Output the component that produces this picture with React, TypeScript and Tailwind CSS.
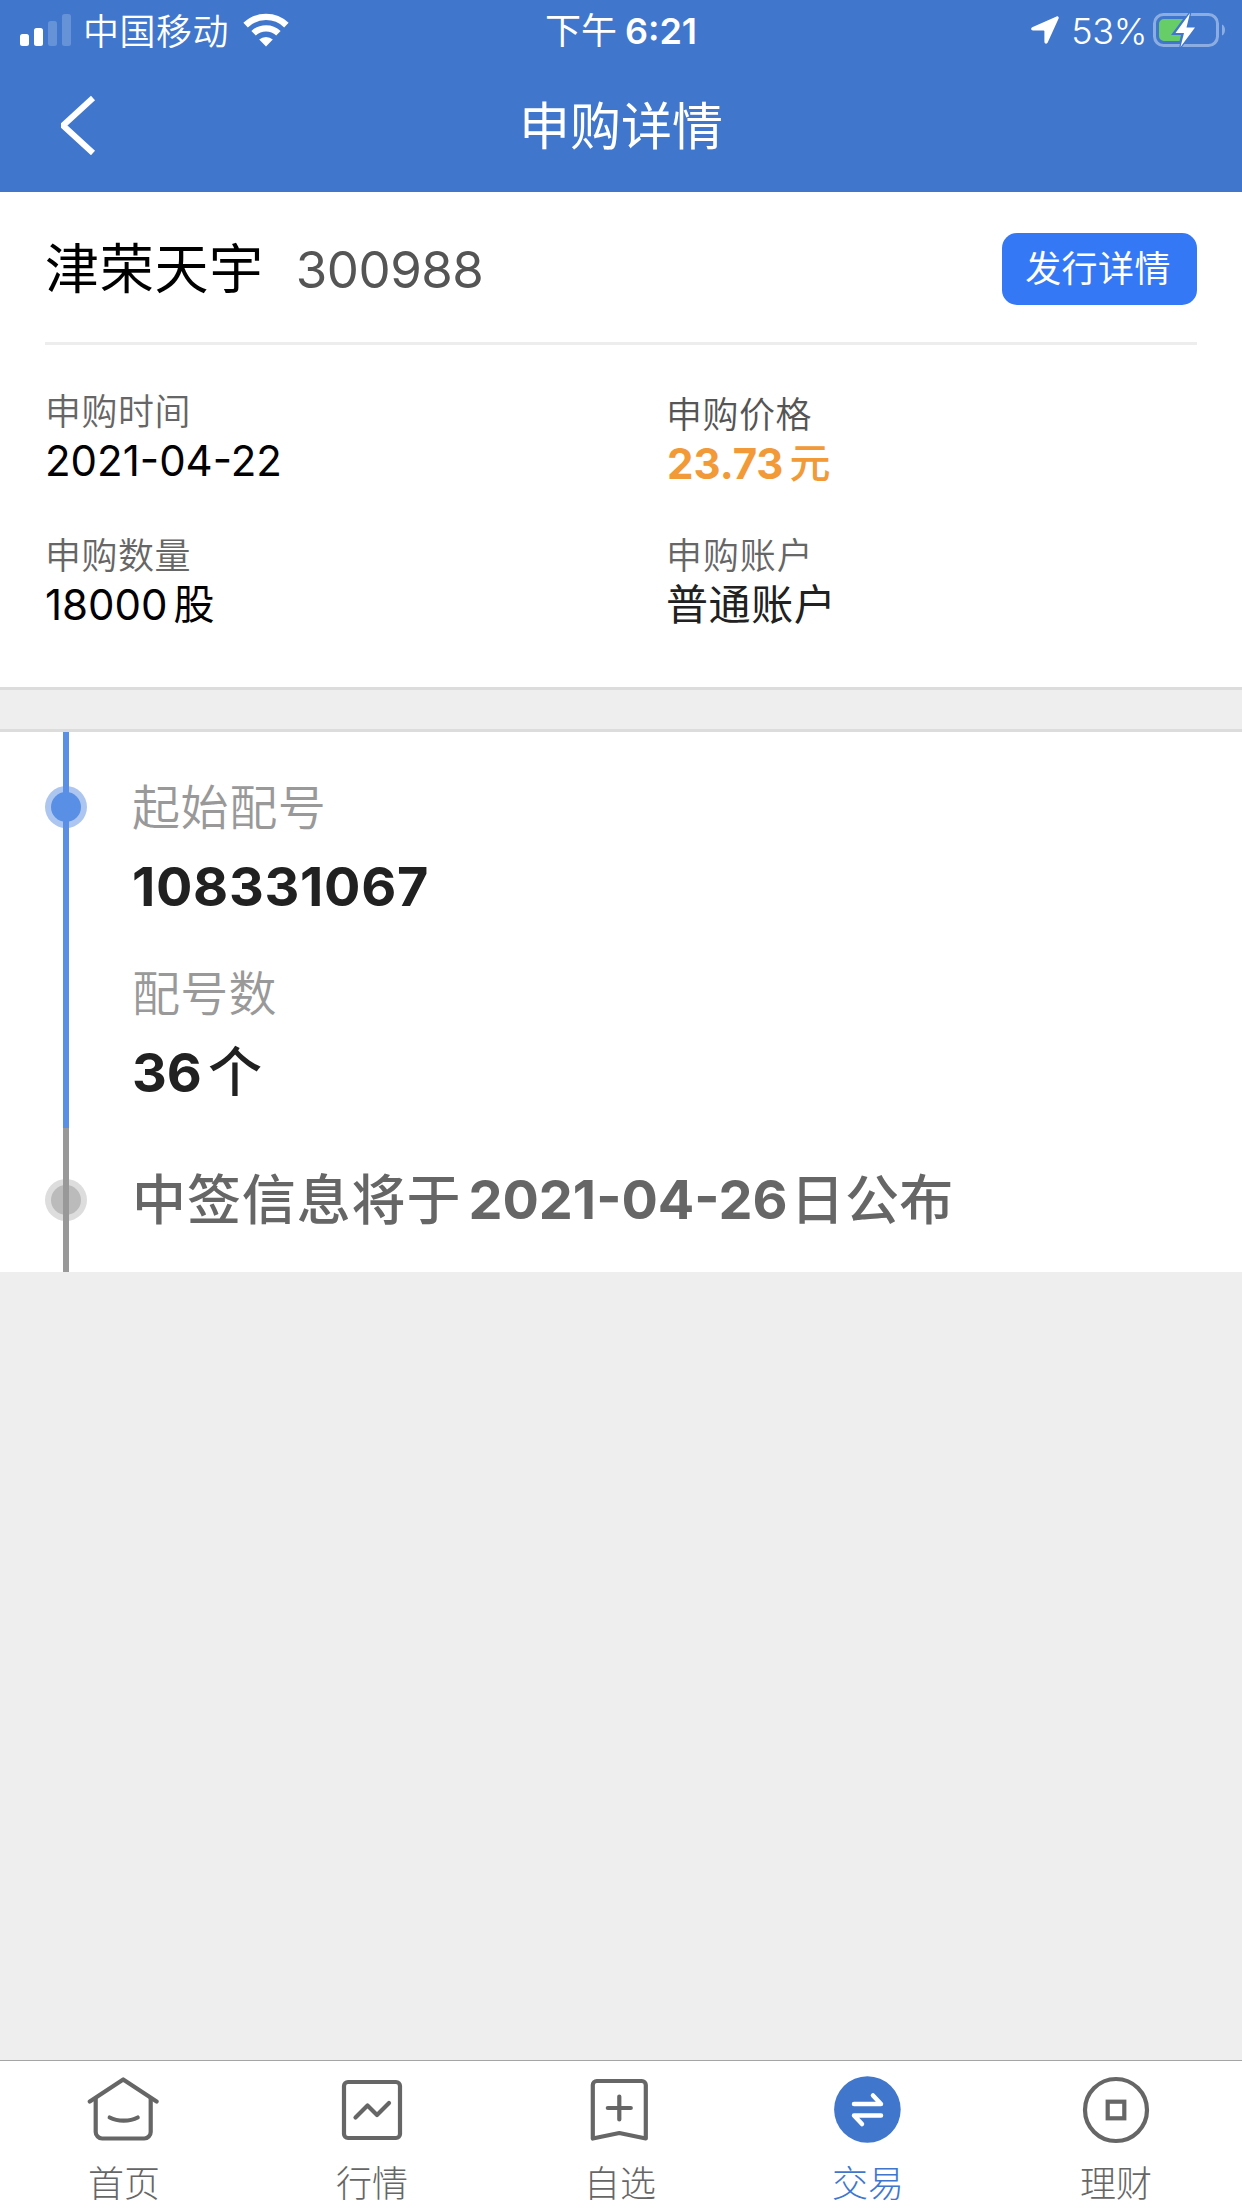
import type { ReactNode } from "react";

function Signal() {
  return (
    <svg className="h-8 w-[51px]" viewBox="0 0 51 32" fill="#fff">
      <rect x="0" y="20" width="9" height="12" rx="2.5" />
      <rect x="14" y="14" width="9" height="18" rx="2.5" />
      <rect x="28" y="7" width="9" height="25" rx="2.5" opacity=".2" />
      <rect x="42" y="0" width="9" height="32" rx="2.5" opacity=".2" />
    </svg>
  );
}

function Wifi() {
  return (
    <svg className="h-[34px] w-[46px]" viewBox="0 0 46 34" fill="none" stroke="#fff" strokeWidth="6.4">
      <path d="M2.6 12.1a29.5 29.5 0 0 1 40.8 0" />
      <path d="M10.6 20.3a18 18 0 0 1 24.8 0" />
      <path d="M16.2 26.6a10 10 0 0 1 13.6 0L23 33.4z" fill="#fff" stroke="none" />
    </svg>
  );
}

function Location() {
  return (
    <svg className="h-7 w-7" viewBox="0 0 28 28" fill="#fff">
      <path d="M25.6.4 1.2 11.2C-.6 12 .1 14.4 2 14.4h10.6c.5 0 .8.3.8.8v10.6c0 2 2.5 2.6 3.3.8L27.6 2.6C28.2 1.2 27 0 25.6.4z" />
    </svg>
  );
}

function Battery() {
  return (
    <svg className="h-9 w-[74px]" viewBox="0 0 74 36" fill="none">
      <rect x="1.5" y="2.5" width="63" height="31" rx="9" stroke="#fff" strokeOpacity=".4" strokeWidth="3" />
      <path d="M69 12.5c4 1.5 4 9.5 0 11z" fill="#fff" fillOpacity=".4" />
      <path d="M11 7h19L18 23h10l-1.5 6H11a5 5 0 0 1-5-5V12a5 5 0 0 1 5-5z" fill="#67ce67" />
      <path d="M37 1 22.5 21H31l-3.5 14L42 15.5h-8.5z" fill="#fff" stroke="#4077cd" strokeWidth="2.5" paintOrder="stroke" />
    </svg>
  );
}

function HomeIcon() {
  return (
    <svg className="h-[70px] w-[74px]" viewBox="0 0 74 70" fill="none" stroke="#666" strokeWidth="4.2" strokeLinecap="round" strokeLinejoin="round">
      <path d="M2.8 27.5 36.2 5.5l33.4 22" />
      <path d="M8.7 24.5V58a6.5 6.5 0 0 0 6.500 6.500h42a6.500 6.500 0 0 0 6.500-6.500V24.500" />
      <path d="M22.700 43.500c8 4.200 20 4.200 28 0" />
    </svg>
  );
}

function MarketIcon() {
  return (
    <svg className="h-[70px] w-[74px]" viewBox="0 0 74 70" fill="none" stroke="#666" strokeWidth="4.2" strokeLinecap="round" strokeLinejoin="round">
      <rect x="9" y="8" width="56" height="56" rx="4" />
      <path d="M20.5 43.5 32.5 31.5 42 41l12-12" />
    </svg>
  );
}

function WatchIcon() {
  return (
    <svg className="h-[70px] w-[74px]" viewBox="0 0 74 70" fill="none" stroke="#666" strokeWidth="4.2" strokeLinecap="round" strokeLinejoin="round">
      <path d="M9.8 64.5V11a4 4 0 0 1 4-4h45a4 4 0 0 1 4 4v53.5L36.300 59z" />
      <path d="M24.800 34h23M36.300 22.500v23" />
    </svg>
  );
}

function TradeIcon() {
  return (
    <svg className="h-[70px] w-[74px]" viewBox="0 0 74 70" fill="none" stroke="#fff" strokeWidth="4.5" strokeLinecap="round" strokeLinejoin="round">
      <circle cx="36.4" cy="35.5" r="33.3" fill="#4077cd" stroke="none" />
      <path d="M23 30h27l-8-8.5" />
      <path d="M50 41.5h-27l8 8.5" />
    </svg>
  );
}

function WealthIcon() {
  return (
    <svg className="h-[70px] w-[74px]" viewBox="0 0 74 70" fill="none" stroke="#666" strokeWidth="4.2">
      <circle cx="37" cy="36" r="31" />
      <rect x="28.7" y="27.7" width="16.6" height="16.6" />
    </svg>
  );
}

const tabs = [
  { label: "首页", icon: <HomeIcon />, active: false },
  { label: "行情", icon: <MarketIcon />, active: false },
  { label: "自选", icon: <WatchIcon />, active: false },
  { label: "交易", icon: <TradeIcon />, active: true },
  { label: "理财", icon: <WealthIcon />, active: false },
];

function Dot({ outer, inner }: { outer: string; inner: string }) {
  return (
    <div className={`flex size-[42px] shrink-0 items-center justify-center rounded-full ${outer}`}>
      <div className={`size-[30px] rounded-full ${inner}`} />
    </div>
  );
}

function Label({ children, className = "" }: { children: ReactNode; className?: string }) {
  return <div className={`text-[36px] leading-[48px] font-[350] ${className}`}>{children}</div>;
}

export default function App() {
  return (
    <div className="flex h-[2208px] w-[1242px] flex-col bg-[#eee] font-['Inter','Noto_Sans_CJK_SC',sans-serif] text-black">
      <header className="h-48 bg-[#4077cd] text-white">
        <div className="grid h-[60px] grid-cols-3 items-center pr-[15px] pl-5">
          <div className="flex items-center">
            <Signal />
            <span className="ml-3 pt-1 text-[36px] leading-[56px] font-[350] tracking-[0.5px]">中国移动</span>
            <div className="ml-3.5"><Wifi /></div>
          </div>
          <div className="flex items-center justify-center pt-[3px] pr-[5px] leading-[57px]">
            <span className="text-[36px]">下午</span>
            <span className="ml-2 text-[36px] font-semibold">6:21</span>
          </div>
          <div className="flex items-center justify-end">
            <Location />
            <span className="ml-3 pt-[3px] text-[36px] leading-[57px] font-[350] tracking-[-0.4px]">53%</span>
            <div className="ml-1.5"><Battery /></div>
          </div>
        </div>
        <div className="grid h-[132px] grid-cols-3 items-center">
          <svg className="mb-1 ml-[58px] h-[60px] w-[38px]" viewBox="0 0 38 60" fill="none" stroke="#fff" strokeWidth="6" strokeLinejoin="bevel">
            <path d="M35 3 5 30.500 35 58" />
          </svg>
          <h1 className="text-center text-[51px] leading-[134px] font-normal">申购详情</h1>
        </div>
      </header>

      <section className="h-[498px] border-b-[3px] border-[#dcdcdc] bg-white px-[45px]">
        <div className="flex h-[153px] items-center border-b-[3px] border-[#ededed] pt-1">
          <span className="mt-0.5 text-[54px] leading-[72px] tracking-[0.7px]">津荣天宇</span>
          <span className="ml-8 mt-px text-[51px] leading-[72px] tracking-[-0.5px] text-[#555]">300988</span>
          <button className="ml-auto h-[72px] w-[195px] rounded-[15px] bg-[#3478f6] pr-[3px] text-[36px] leading-[72px] tracking-[0.4px] text-white">发行详情</button>
        </div>
        <div className="grid grid-cols-[621px_1fr] pt-[43px]">
          <div>
            <Label className="tracking-[0.5px] text-[#666]">申购时间</Label>
            <div className="text-[42px] leading-[49px]">2021-04-22</div>
          </div>
          <div className="pt-[3px]">
            <Label className="tracking-[0.5px] text-[#555]">申购价格</Label>
            <div className="flex pl-px text-[42px] leading-[49px] text-[#f19a37]">
              <span className="font-bold">23.73</span>
              <span className="ml-1.5 text-[41px] font-medium">元</span>
            </div>
          </div>
        </div>
        <div className="grid grid-cols-[621px_1fr] pt-11">
          <div>
            <Label className="tracking-[0.5px] text-[#666]">申购数量</Label>
            <div className="flex text-[42px] leading-[49px]">
              <span>18000</span>
              <span className="ml-1.5 text-[41px]">股</span>
            </div>
          </div>
          <div>
            <Label className="tracking-[0.9px] text-[#666]">申购账户</Label>
            <div className="text-[42px] leading-[50px] tracking-[0.6px] text-[#212121]">普通账户</div>
          </div>
        </div>
      </section>

      <section className="mt-[39px] h-[543px] border-t-[3px] border-[#dcdcdc] bg-white">
        <div className="relative h-[396px] pl-[132px]">
          <div className="absolute top-[54px] left-[45px]"><Dot outer="bg-[#acc6f0]" inner="bg-[#5a8fe6]" /></div>
          <div className="absolute top-0 left-[63px] h-full w-1.5 bg-[#5a8fe6]" />
          <div className="pt-10 text-[48px] leading-[72px] font-[350] tracking-[0.6px] text-[#999]">起始配号</div>
          <div className="pt-[7px] text-[54px] leading-[72px] font-bold tracking-[0.7px] text-[#212121]">108331067</div>
          <div className="pt-[35px] text-[48px] leading-[72px] font-[350] tracking-[0.2px] text-[#999]">配号数</div>
          <div className="flex pt-[7px] text-[54px] leading-[72px] text-[#212121]">
            <span className="font-bold">36</span>
            <span className="ml-1.5 font-medium">个</span>
          </div>
        </div>
        <div className="relative flex h-36 items-center pl-[132px] text-[54px] leading-[72px] text-[#666]">
          <div className="absolute top-[51px] left-[45px]"><Dot outer="bg-[#ddd]" inner="bg-[#bbb]" /></div>
          <div className="absolute top-0 left-[63px] h-full w-1.5 bg-[#999]" />
          <span className="pt-0.5 font-medium tracking-[0.9px]">中签信息将于</span>
          <span className="ml-[7px] font-bold">2021-04-26</span>
          <span className="ml-[3px] pt-0.5 font-medium tracking-[0.4px]">日公布</span>
        </div>
      </section>

      <nav className="mt-auto grid h-[148px] grid-cols-5 border-t border-[#a5a5a5] bg-white pt-[13px] pr-0.5">
        {tabs.map((t) => (
          <div key={t.label} className="flex flex-col items-center">
            {t.icon}
            <span className={`mt-4 text-[36px] leading-[48px] font-light ${t.active ? "text-[#4077cd]" : "text-[#666]"}`}>{t.label}</span>
          </div>
        ))}
      </nav>
    </div>
  );
}
